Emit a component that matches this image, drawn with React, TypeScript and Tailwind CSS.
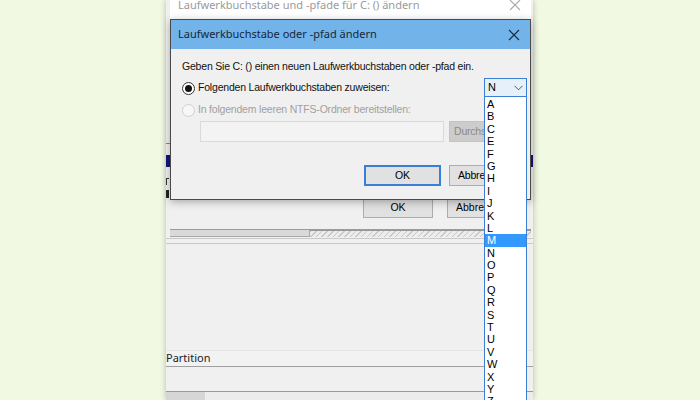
import React from "react";

const letters = ["A","B","C","E","F","G","H","I","J","K","L","M","N","O","P","Q","R","S","T","U","V","W","X","Y","Z"];

const CloseIcon = ({ color }: { color: string }) => (
  <svg width="12" height="12" viewBox="0 0 12 12" fill="none" stroke={color} strokeWidth="1.1">
    <path d="M1 1 L11 11 M11 1 L1 11" />
  </svg>
);

export default function App() {
  return (
    <div className="w-[700px] h-[400px] overflow-hidden bg-[#f1f9e3] pl-[166px] font-['Liberation_Sans',Arial,sans-serif]">
      <div className="relative w-[367px] h-[400px] bg-[#f0f0f0] shadow-[0_0_6px_rgba(0,0,0,0.25)] flex flex-col">
        {/* background window strips on the left edge */}
        <div className="absolute left-0 top-[143px] w-[4px] h-[1px] bg-[#888]" />
        <div className="absolute left-0 top-[155px] w-[4px] h-[12px] bg-[#14147a]" />
        <div className="absolute left-0 top-[178px] w-[3px] h-[7px] border-l border-t border-[#333]" />
        <div className="absolute left-0 top-[190px] w-[3px] h-[8px] bg-[#222]" />
        <div className="absolute right-0 top-[155px] w-[2px] h-[12px] bg-[#14147a]" />

        {/* outer dialog */}
        <div className="ml-[4px] w-[361px] h-[230px] flex flex-col border-b border-[#9a9a9a]">
          <div className="h-[19px] bg-white flex items-center justify-between pl-[8px] pr-[10px]">
            <span className="text-[11px] text-[#9a9a9a] font-['Noto_Sans',sans-serif] -mt-[8px]">Laufwerkbuchstabe und -pfade für C: () ändern</span>
            <div className="-mt-[10px]"><CloseIcon color="#aaa" /></div>
          </div>
          <div className="flex-1 bg-[#f0f0f0] flex flex-col">
            <div className="flex gap-[14px] mt-[179px] ml-[193px]">
              <div className="w-[70px] h-[20px] bg-[#e1e1e1] border border-[#adadad] flex items-center justify-center text-[10.5px] text-black">OK</div>
              <div className="w-[75px] h-[20px] bg-[#e1e1e1] border border-[#adadad] flex items-center pl-[8px] text-[10.5px] text-black">Abbrechen</div>
            </div>
          </div>
        </div>

        {/* disk map bar */}
        <div className="ml-[4px] w-[361px] h-[7px] flex">
          <div className="w-[140px] h-full bg-[#d9d9d9] border-b border-r border-[#a8a8a8]" />
          <div className="flex-1 h-full bg-[repeating-linear-gradient(135deg,#c8c8c8_0px,#c8c8c8_1px,#ececec_1px,#ececec_4px)] border-t border-[#999]" />
        </div>
        <div className="h-[1px] mt-[1px] bg-[#c9c9c9]" />
        <div className="h-[1px] mt-[4px] bg-[#c9c9c9]" />
        <div className="h-[106px] bg-[#f0f0f0]" />
        <div className="h-[17px] border-t border-[#e4e4e4] border-b border-b-[#a0a0a0] bg-[#f2f2f2] flex items-center text-[11px] text-[#222] font-['Noto_Sans',sans-serif]">Partition</div>
        <div className="h-[25px] bg-[#f0f0f0] border-b border-[#9a9a9a]" />
        <div className="flex-1 flex">
          <div className="w-[39px] bg-[#d6d6d6]" />
          <div className="flex-1 bg-[#ececec]" />
        </div>

        {/* inner dialog */}
        <div className="absolute left-[4px] top-[19px] w-[361px] h-[181px] border border-[#4a4a4a] bg-[#f0f0f0] shadow-[0_2px_8px_rgba(0,0,0,0.3)] flex flex-col">
          <div className="h-[29px] bg-[#72b4ea] flex items-center justify-between pl-[7px] pr-[10px]">
            <span className="text-[11px] text-[#16263a] font-['Noto_Sans',sans-serif]">Laufwerkbuchstabe oder -pfad ändern</span>
            <CloseIcon color="#1a2a3a" />
          </div>
          <div className="flex flex-col pl-[11px] pt-[10px] text-[10.5px] tracking-[-0.2px]">
            <div className="text-[#111] leading-[14px]">Geben Sie C: () einen neuen Laufwerkbuchstaben oder -pfad ein.</div>
            <div className="flex items-center gap-[3px] mt-[8px] h-[14px]">
              <div className="w-[13px] h-[13px] rounded-full border border-[#333] bg-white flex items-center justify-center">
                <div className="w-[7px] h-[7px] rounded-full bg-[#111]" />
              </div>
              <span className="text-[#111]">Folgenden Laufwerkbuchstaben zuweisen:</span>
            </div>
            <div className="flex items-center gap-[3px] mt-[8px] h-[14px]">
              <div className="w-[13px] h-[13px] rounded-full border border-[#d0d0d0] bg-[#f7f7f7]" />
              <span className="text-[#a0a0a0]">In folgendem leeren NTFS-Ordner bereitstellen:</span>
            </div>
            <div className="flex gap-[5px] mt-[4px] ml-[18px]">
              <div className="w-[244px] h-[21px] border border-[#d9d9d9] bg-[#f3f3f3]" />
              <div className="w-[60px] h-[21px] bg-[#cccccc] border border-[#c4c4c4] flex items-center pl-[4px] text-[#8a8a8a]">Durchsuchen</div>
            </div>
            <div className="flex gap-[8px] mt-[23px] ml-[182px]">
              <div className="w-[77px] h-[21px] bg-[#e1e1e1] border-2 border-[#3a7fd2] flex items-center justify-center text-black">OK</div>
              <div className="w-[77px] h-[21px] bg-[#e1e1e1] border border-[#adadad] flex items-center pl-[8px] text-black">Abbrechen</div>
            </div>
          </div>
        </div>

        {/* combo box + open list */}
        <div className="absolute left-[318px] top-[78px] w-[43px] flex flex-col">
          <div className="h-[19px] bg-[#e6f0fa] border border-[#3a7fd2] flex items-center justify-between pl-[3px] pr-[3px]">
            <span className="text-[11px] text-black">N</span>
            <svg width="9" height="6" viewBox="0 0 9 6" fill="none" stroke="#555" strokeWidth="1">
              <path d="M0.5 0.8 L4.5 4.8 L8.5 0.8" />
            </svg>
          </div>
          <div className="h-[310px] bg-white border border-t-0 border-[#3a7fd2] pt-[1px] flex flex-col overflow-hidden">
            {letters.map((l) => (
              <div
                key={l}
                className={l === "M" ? "h-[12.4px] shrink-0 leading-[12.4px] text-[11px] pl-[2px] bg-[#3399ff] text-white" : "h-[12.4px] shrink-0 leading-[12.4px] text-[11px] pl-[2px] text-black"}
              >
                {l}
              </div>
            ))}
          </div>
        </div>
      </div>
    </div>
  );
}
